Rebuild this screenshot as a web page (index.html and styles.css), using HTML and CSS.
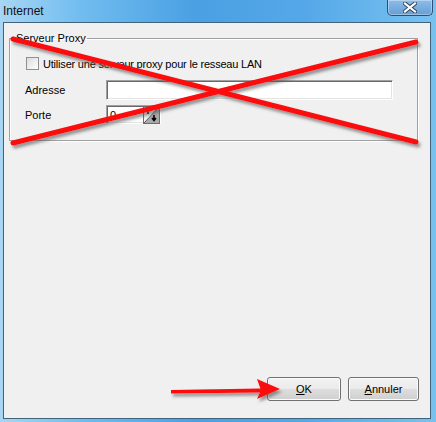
FILE: index.html
```html
<!DOCTYPE html>
<html lang="fr">
<head>
  <meta charset="UTF-8" />
  <title>Internet</title>
  <link rel="stylesheet" href="styles.css">
</head>
<body>
  <div class="window">
    <div class="titlebar">
      <span class="title">Internet</span>
      <div class="close-btn">
        <svg width="14" height="11" viewBox="0 0 14 11">
          <path d="M2 1.5 L12 9.5 M12 1.5 L2 9.5" stroke="#2d3f57" stroke-width="4" stroke-linecap="square"/>
          <path d="M2 1.5 L12 9.5 M12 1.5 L2 9.5" stroke="#fff" stroke-width="2.2" stroke-linecap="square"/>
        </svg>
      </div>
    </div>

    <div class="client">
      <fieldset class="group">
        <legend>Serveur Proxy</legend>
        <div class="check-row">
          <span class="checkbox"></span>
          <span class="check-label">Utiliser une serveur proxy pour le resseau LAN</span>
        </div>
        <div class="row">
          <span class="lbl">Adresse</span>
          <span class="field field-wide"></span>
        </div>
        <div class="row row-port">
          <span class="lbl">Porte</span>
          <span class="field field-spin">
            <span class="spin-val">0</span>
            <svg class="spin-btn" width="17" height="18" viewBox="0 0 17 18">
              <rect x="0.5" y="0.5" width="16" height="17" fill="#f4f4f4" stroke="#6d6d6d"/>
              <polygon points="16,1 16,17 1,17" fill="#a9a9a9"/>
              <line x1="1" y1="17" x2="16" y2="1" stroke="#5a5a5a" stroke-width="1"/>
              <path d="M5 3 L5 8 M3 5 L5 2.5 L7 5" stroke="#000" stroke-width="1.6" fill="none"/>
              <path d="M11 9 L11 14 M9 12 L11 14.5 L13 12" stroke="#000" stroke-width="1.6" fill="none"/>
            </svg>
          </span>
        </div>
      </fieldset>

      <!-- annotation overlay: red cross over the proxy group -->
      <svg class="cross" width="428" height="140" viewBox="0 0 428 140">
        <defs>
          <filter id="shade" x="-5%" y="-20%" width="110%" height="140%">
            <feDropShadow dx="2" dy="3" stdDeviation="1.5" flood-color="#555" flood-opacity="0.6"/>
          </filter>
        </defs>
        <g filter="url(#shade)" stroke="#fb0a0a" stroke-width="5" stroke-linecap="round">
          <line x1="9" y1="16" x2="412" y2="119"/>
          <line x1="9" y1="120" x2="412" y2="19"/>
        </g>
      </svg>

      <div class="actions">
        <button class="btn btn-ok"><u>O</u>K</button>
        <button class="btn btn-cancel"><u>A</u>nnuler</button>
      </div>

      <!-- annotation overlay: red arrow pointing at OK -->
      <svg class="arrow" width="120" height="30" viewBox="0 0 120 30">
        <defs>
          <filter id="shade2" x="-10%" y="-30%" width="120%" height="180%">
            <feDropShadow dx="2" dy="3" stdDeviation="1.5" flood-color="#555" flood-opacity="0.6"/>
          </filter>
        </defs>
        <g filter="url(#shade2)" fill="#fb0a0a">
          <polygon points="2,15 92,13.5 92,17.5 2,18.5"/>
          <polygon points="88,4 111,14 88,24 92,15"/>
        </g>
      </svg>
    </div>
  </div>
</body>
</html>
```

FILE: styles.css
```css
body {
  margin: 0;
  width: 436px;
  height: 422px;
  overflow: hidden;
  font-family: "Liberation Sans", Arial, sans-serif;
  font-size: 11px;
  color: #000;
}

.window {
  width: 436px;
  height: 422px;
  box-sizing: border-box;
  display: flex;
  flex-direction: column;
  padding: 0 5px 3px 3px;
  background: linear-gradient(90deg, #a8d6f4 0%, #72bdf0 18%, #4aa0e3 45%, #55a8e8 70%, #78c2f0 100%);
}

.titlebar {
  height: 22px;
  display: flex;
  align-items: flex-start;
  justify-content: space-between;
  flex-shrink: 0;
}

.title {
  font-size: 12px;
  line-height: 14px;
  padding-top: 4px;
  color: #111;
}

.close-btn {
  width: 44px;
  height: 15px;
  margin-right: -2px;
  border: 1px solid #2f4d76;
  border-top: none;
  border-radius: 0 0 5px 5px;
  background: linear-gradient(#8cbde9, #659ed6);
  box-shadow: inset 0 0 0 1px rgba(255, 255, 255, 0.35);
  display: flex;
  align-items: center;
  justify-content: center;
}

.client {
  flex: 1;
  position: relative;
  background: #f0f0f0;
  border: 1px solid #41647c;
  display: flex;
  flex-direction: column;
}

.group {
  margin: 9px 12px 0 5px;
  padding: 0 0 16px 0;
  border: 1px solid #a0a0a0;
  box-shadow: 1px 1px 0 #fff, inset 1px 1px 0 #fff;
  min-width: 0;
}

.group legend {
  margin-left: 5px;
  padding: 0 1px;
  line-height: 13px;
}

.check-row {
  display: flex;
  align-items: center;
  gap: 4px;
  margin: 12px 0 0 16px;
  height: 13px;
}

.check-label {
  letter-spacing: -0.2px;
}

.checkbox {
  width: 11px;
  height: 11px;
  border: 1px solid #8e8f8f;
  background: linear-gradient(135deg, #dcdcdc, #fff);
}

.row {
  display: flex;
  align-items: center;
  margin: 10px 0 0 15px;
}

.row-port {
  margin-top: 5px;
}

.lbl {
  width: 81px;
}

.field {
  box-sizing: border-box;
  height: 20px;
  background: #fff;
  border: 1px solid;
  border-color: #a0a0a0 #fff #fff #a0a0a0;
  box-shadow: inset 1px 1px 0 #696969, inset -1px -1px 0 #e3e3e3;
}

.field-wide {
  width: 287px;
}

.field-spin {
  width: 55px;
  height: 19px;
  display: flex;
  align-items: center;
  justify-content: space-between;
  padding: 0 0 0 3px;
}

.spin-val {
  line-height: 14px;
}

.spin-btn {
  display: block;
}

.cross {
  position: absolute;
  left: 0;
  top: 0;
  pointer-events: none;
}

.actions {
  margin-top: auto;
  display: flex;
  justify-content: flex-end;
  gap: 7px;
  padding: 0 11px 17px 0;
}

.btn {
  height: 24px;
  box-sizing: border-box;
  border: 1px solid #707070;
  border-radius: 3px;
  background: linear-gradient(#f2f2f2 0%, #ebebeb 48%, #dddddd 52%, #cfcfcf 100%);
  box-shadow: inset 0 0 0 1px #fcfcfc;
  font-family: "Liberation Sans", Arial, sans-serif;
  font-size: 11px;
  color: #000;
  padding: 0;
}

.btn-ok {
  width: 74px;
}

.btn-cancel {
  width: 71px;
}

.arrow {
  position: absolute;
  left: 165px;
  top: 352px;
  pointer-events: none;
}
```
